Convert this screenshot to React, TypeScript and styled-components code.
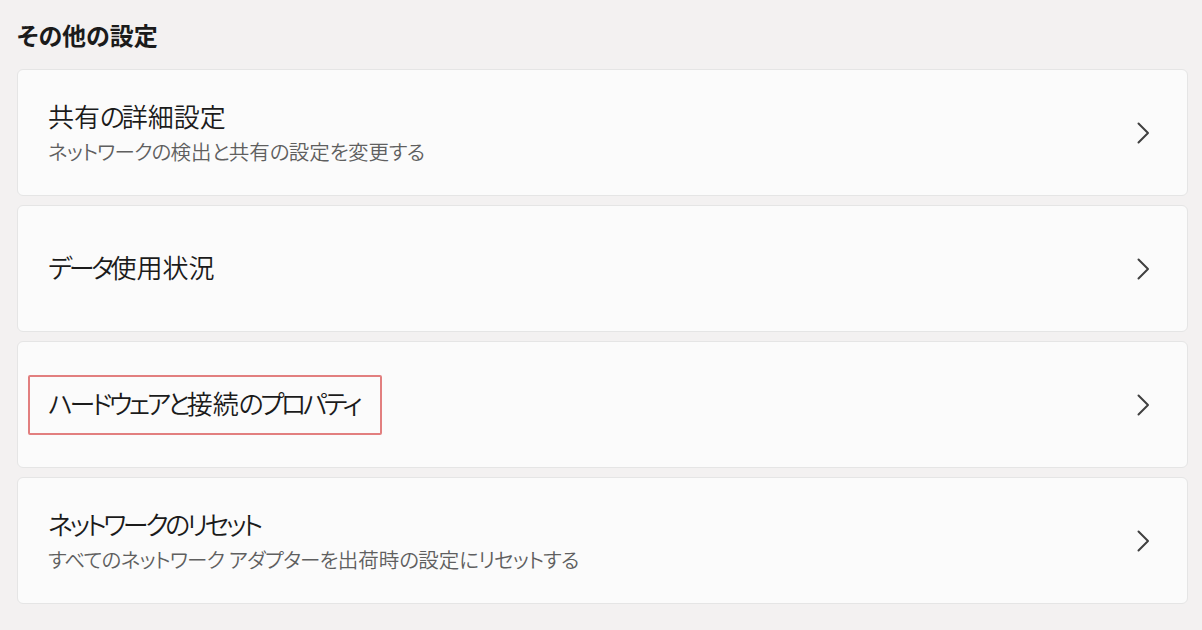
import React from "react";
import styled, { createGlobalStyle } from "styled-components";

const Global = createGlobalStyle`
  html, body { margin: 0; padding: 0; background: #f3f1f1; }
  body {
    font-family: "Noto Sans CJK JP", "Noto Sans", sans-serif;
    font-feature-settings: "palt";
    color: #1b1b1b;
  }
`;

const Page = styled.div`
  width: 1202px;
  height: 630px;
  box-sizing: border-box;
  padding: 17px 14px 0 17px;
  display: flex;
  flex-direction: column;
`;

const Heading = styled.h2`
  margin: 0 0 16px 0;
  font-size: 24px;
  font-weight: 700;
  line-height: 36px;
  color: #1b1b1b;
`;

const List = styled.div`
  display: flex;
  flex-direction: column;
  gap: 9px;
`;

const Card = styled.div`
  height: 127px;
  box-sizing: border-box;
  background: #fbfbfb;
  border: 1px solid #e5e5e5;
  border-radius: 6px;
  display: flex;
  align-items: center;
  padding: 0 37px 0 30px;
`;

const Texts = styled.div`
  flex: 1;
  display: flex;
  flex-direction: column;
  padding-bottom: 4px;
`;

const Title = styled.span<{ $marked?: boolean }>`
  position: relative;
  align-self: flex-start;
  font-size: 26px;
  font-weight: 350;
  line-height: 40px;
  color: #1b1b1b;
  ${(p) =>
    p.$marked
      ? `
    &::after {
      content: "";
      position: absolute;
      left: -20px;
      right: -23px;
      top: -8px;
      bottom: -12px;
      border: 2px solid #e27f7f;
      border-radius: 2px;
    }
  `
      : ""}
`;

const Sub = styled.span`
  font-size: 20.5px;
  font-weight: 350;
  line-height: 30px;
  color: #5f5f5f;
`;

const Kana = styled.span<{ $tight: number }>`
  letter-spacing: ${(p) => p.$tight}px;
`;

const Jp = ({ text, tight }: { text: string; tight: number }) => {
  const parts = text.match(/[\u3040-\u30ff]+|[^\u3040-\u30ff]+/g) || [];
  return (
    <>
      {parts.map((s, i) =>
        /[\u3040-\u30ff]/.test(s) ? (
          <Kana key={i} $tight={tight}>
            {s}
          </Kana>
        ) : (
          <React.Fragment key={i}>{s}</React.Fragment>
        )
      )}
    </>
  );
};

const Chevron = () => (
  <svg width="14" height="22" viewBox="0 0 14 22" fill="none">
    <path d="M2.5 1.5 L12 11 L2.5 20.5" stroke="#404040" strokeWidth="2" strokeLinecap="round" strokeLinejoin="round" />
  </svg>
);

const items: { title: string; sub?: string; marked?: boolean }[] = [
  { title: "共有の詳細設定", sub: "ネットワークの検出と共有の設定を変更する" },
  { title: "データ使用状況" },
  { title: "ハードウェアと接続のプロパティ", marked: true },
  { title: "ネットワークのリセット", sub: "すべてのネットワーク アダプターを出荷時の設定にリセットする" },
];

export default function App() {
  return (
    <>
      <Global />
      <Page>
        <Heading>その他の設定</Heading>
        <List>
          {items.map((it) => (
            <Card key={it.title}>
              <Texts>
                <Title $marked={it.marked}>
                  <Jp text={it.title} tight={-3.4} />
                </Title>
                {it.sub && (
                  <Sub>
                    <Jp text={it.sub} tight={-0.8} />
                  </Sub>
                )}
              </Texts>
              <Chevron />
            </Card>
          ))}
        </List>
      </Page>
    </>
  );
}
